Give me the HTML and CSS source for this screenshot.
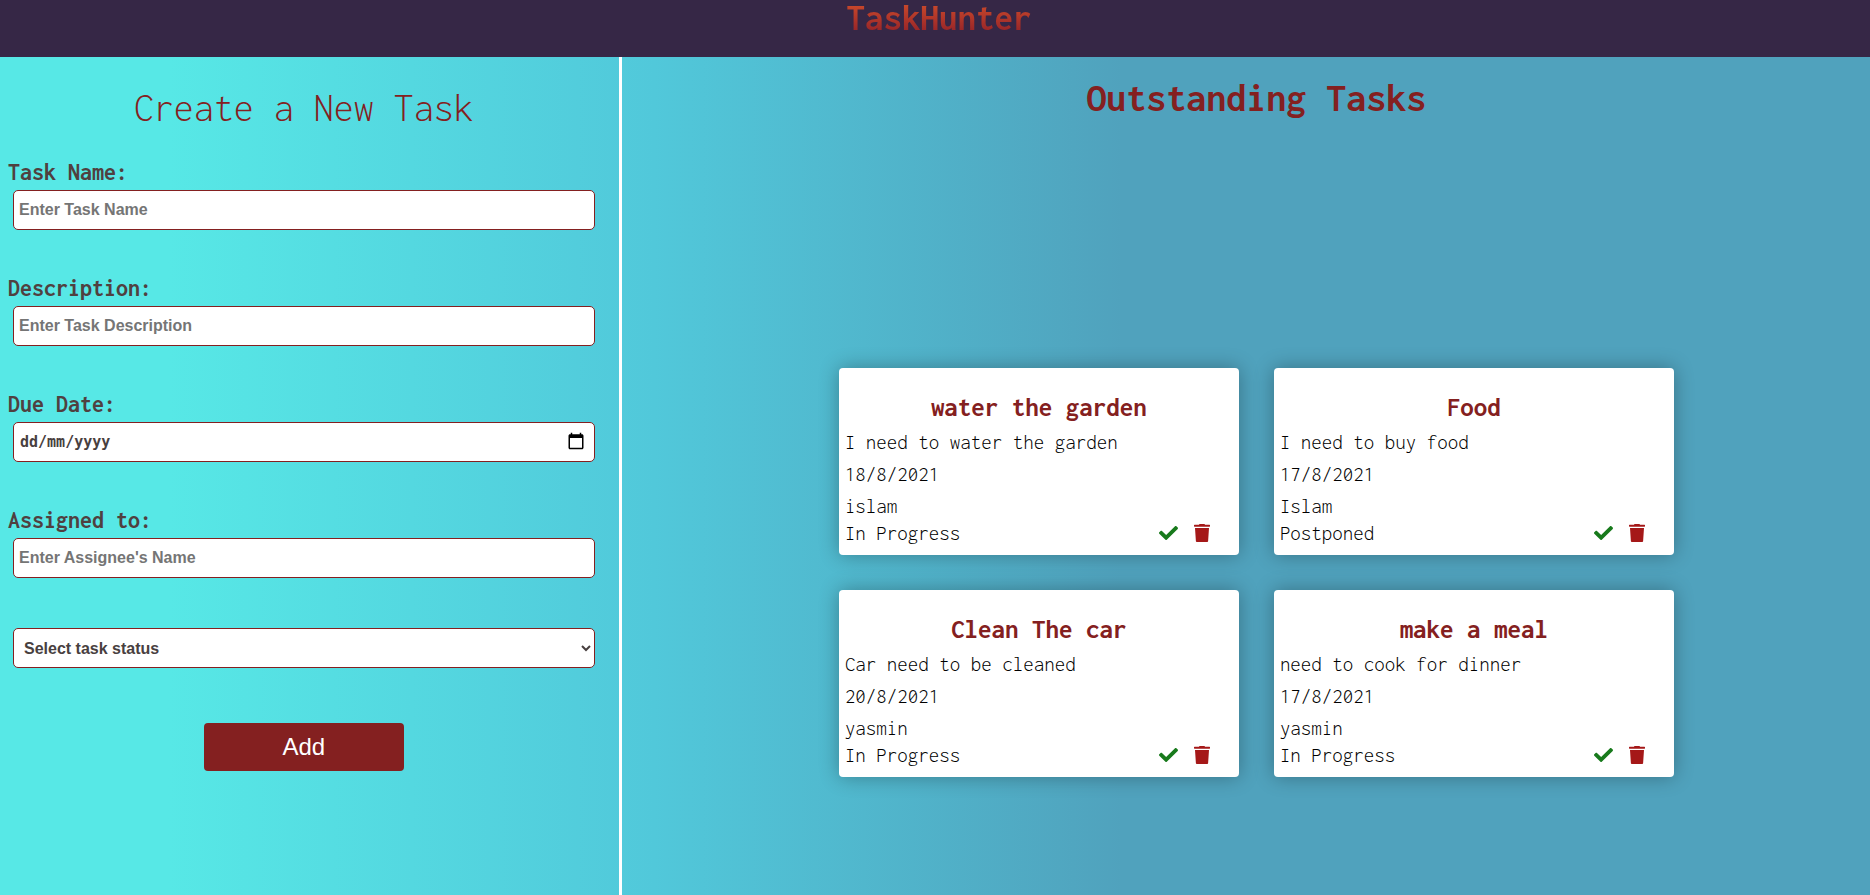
FILE: index.html
```html
<!DOCTYPE html>
<html lang="en-GB">
<head>
<meta charset="utf-8">
<title>TaskHunter</title>
<link rel="stylesheet" href="styles.css">
</head>
<body>
<svg class="sprite" aria-hidden="true">
  <symbol id="check" viewBox="0 0 512 512"><path d="M173.898 439.404l-166.4-166.4c-9.997-9.997-9.997-26.206 0-36.204l36.203-36.204c9.997-9.998 26.207-9.998 36.204 0L192 312.690 432.095 72.596c9.997-9.997 26.207-9.997 36.204 0l36.203 36.204c9.997 9.997 9.997 26.206 0 36.204l-294.400 294.401c-9.998 9.997-26.207 9.997-36.204-.001z"/></symbol>
  <symbol id="trash" viewBox="0 0 16 18"><path d="M5 .8Q5 0 5.800 0h4.400Q11 0 11 .8h4.500q.5 0 .5.500v1q0 .4-.5.400H.5Q0 2.700 0 2.300v-1Q0 .8.500.800zM1 4h14l-.9 13.200q-.1.800-.9.800H2.800q-.8 0-.9-.8z"/></symbol>
</svg>
<header class="topbar"><h1 class="brand">TaskHunter</h1></header>
<main class="layout">
  <section class="create">
    <h2 class="create-title">Create a New Task</h2>
    <form>
      <div class="field">
        <label for="name">Task Name:</label>
        <input class="control" id="name" type="text" placeholder="Enter Task Name">
      </div>
      <div class="field">
        <label for="description">Description:</label>
        <input class="control" id="description" type="text" placeholder="Enter Task Description">
      </div>
      <div class="field">
        <label for="due">Due Date:</label>
        <div class="date">
          <input class="control control-date" id="due" type="text" inputmode="numeric" placeholder="dd/mm/yyyy">
          <button class="date-button" type="button" aria-label="Show date picker">
            <svg viewBox="0 0 24 24"><path d="M20 3h-1V1h-2v2H7V1H5v2H4c-1.100 0-2 .9-2 2v16c0 1.100.9 2 2 2h16c1.100 0 2-.9 2-2V5c0-1.100-.9-2-2-2zm0 18H4V8h16v13z"/></svg>
          </button>
        </div>
      </div>
      <div class="field">
        <label for="assignee">Assigned to:</label>
        <input class="control" id="assignee" type="text" placeholder="Enter Assignee's Name">
      </div>
      <select class="control control-select" aria-label="Task status">
        <option>Select task status</option>
        <option>In Progress</option>
        <option>Postponed</option>
      </select>
      <button class="add" type="submit">Add</button>
    </form>
  </section>
  <section class="tasks">
    <h2 class="tasks-title">Outstanding Tasks</h2>
    <div class="cards">
      <article class="card">
        <h3>water the garden</h3>
        <p>I need to water the garden</p>
        <p>18/8/2021</p>
        <p>islam</p>
        <footer><span>In Progress</span>
          <button class="icon done" type="button" aria-label="Mark done"><svg><use href="#check"/></svg></button>
          <button class="icon delete" type="button" aria-label="Delete"><svg><use href="#trash"/></svg></button>
        </footer>
      </article>
      <article class="card">
        <h3>Food</h3>
        <p>I need to buy food</p>
        <p>17/8/2021</p>
        <p>Islam</p>
        <footer><span>Postponed</span>
          <button class="icon done" type="button" aria-label="Mark done"><svg><use href="#check"/></svg></button>
          <button class="icon delete" type="button" aria-label="Delete"><svg><use href="#trash"/></svg></button>
        </footer>
      </article>
      <article class="card">
        <h3>Clean The car</h3>
        <p>Car need to be cleaned</p>
        <p>20/8/2021</p>
        <p>yasmin</p>
        <footer><span>In Progress</span>
          <button class="icon done" type="button" aria-label="Mark done"><svg><use href="#check"/></svg></button>
          <button class="icon delete" type="button" aria-label="Delete"><svg><use href="#trash"/></svg></button>
        </footer>
      </article>
      <article class="card">
        <h3>make a meal</h3>
        <p>need to cook for dinner</p>
        <p>17/8/2021</p>
        <p>yasmin</p>
        <footer><span>In Progress</span>
          <button class="icon done" type="button" aria-label="Mark done"><svg><use href="#check"/></svg></button>
          <button class="icon delete" type="button" aria-label="Delete"><svg><use href="#trash"/></svg></button>
        </footer>
      </article>
    </div>
  </section>
</main>
</body>
</html>
```
FILE: styles.css
```css
* { box-sizing: border-box; }

body {
  margin: 0;
  min-height: 100vh;
  display: flex;
  flex-direction: column;
  font-family: Inconsolata, "DejaVu Sans Mono", monospace;
  background: linear-gradient(to right, #57e8e6 9%, #51c8da 35%, #50a2bd 60%);
}

h1, h2, h3, p { margin: 0; }

.sprite { display: none; }

.topbar {
  height: 57px;
  padding-left: 8px;
  background: #362746;
  text-align: center;
}

.brand {
  font-size: 37px;
  line-height: 36px;
  color: transparent;
  background: linear-gradient(#d14e2b, #8f1f28);
  -webkit-background-clip: text;
  background-clip: text;
}

.layout { flex: 1; display: flex; }

.create {
  width: 33.25%;
  padding: 25px 19px 40px 8px;
  border-right: 3px solid #fff;
}

.create-title {
  margin-bottom: 28px;
  font-size: 40px;
  font-weight: 300;
  line-height: 52px;
  color: #842020;
  text-align: center;
}

form { display: flex; flex-direction: column; }

.field {
  display: flex;
  flex-direction: column;
  margin-bottom: 48px;
}

label {
  margin-bottom: 8px;
  font-size: 24px;
  font-weight: 700;
  line-height: 20px;
  color: #504040;
}

.control {
  height: 40px;
  margin: 0 5px;
  padding: 0 5px;
  border: 1px solid #842020;
  border-radius: 5px;
  background: #fff;
  color: #484040;
  font: 700 16px "Liberation Sans", Arial, sans-serif;
}

.control::placeholder { color: #757575; }

.date { position: relative; display: flex; }

.control-date {
  flex: 1;
  padding-left: 6px;
  font: 700 15px "DejaVu Sans Mono", monospace;
}

.control-date::placeholder { color: #484040; }

.date-button {
  position: absolute;
  top: 10px;
  right: 15px;
  width: 18px;
  height: 18px;
  padding: 0;
  border: 0;
  background: none;
}

.date-button svg { display: block; width: 18px; height: 18px; }

.control-select { margin-top: 2px; padding-left: 6px; }

.add {
  align-self: center;
  width: 200px;
  height: 48px;
  margin-top: 55px;
  border: 0;
  border-radius: 4px;
  background: #842020;
  color: #fff;
  font: 24px "Liberation Sans", Arial, sans-serif;
}

.tasks {
  flex: 1;
  padding: 19px 0 40px 21px;
}

.tasks-title {
  margin-bottom: 248px;
  font-size: 40px;
  line-height: 44px;
  color: #842020;
  text-align: center;
}

.cards {
  display: flex;
  flex-wrap: wrap;
  justify-content: center;
  gap: 35px;
  max-width: 835px;
  margin: 0 auto;
}

.card {
  width: 400px;
  padding: 22px 6px 11px;
  border-radius: 4px;
  background: #fff;
  box-shadow: 0 0 20px rgba(0, 0, 0, 0.3);
  font-size: 21px;
  font-weight: 300;
}

.card h3 {
  margin-bottom: 2px;
  font-size: 27px;
  line-height: 34px;
  color: #842020;
  text-align: center;
}

.card p { line-height: 32px; }

.card footer {
  display: flex;
  align-items: center;
  gap: 16px;
  padding-right: 23px;
  line-height: 22px;
}

.card footer span { flex: 1; }

.icon {
  padding: 0;
  border: 0;
  background: none;
}

.icon svg { display: block; height: 18px; fill: currentColor; }

.done { color: #187a1c; }
.done svg { width: 19px; height: 20px; }

.delete { color: #a51818; }
.delete svg { width: 16px; }
```
